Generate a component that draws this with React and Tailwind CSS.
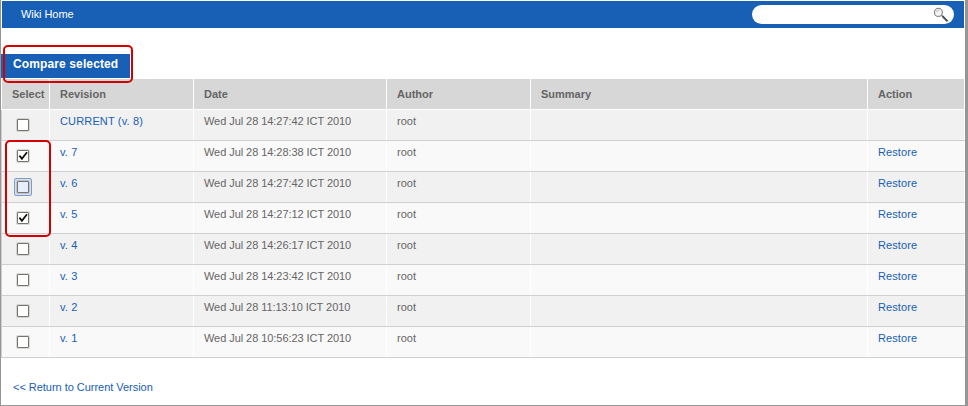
import React from "react";

const revisions = [
  { name: "CURRENT (v. 8)", date: "Wed Jul 28 14:27:42 ICT 2010", current: true },
  { name: "v. 7", date: "Wed Jul 28 14:28:38 ICT 2010", checked: true },
  { name: "v. 6", date: "Wed Jul 28 14:27:42 ICT 2010", focused: true },
  { name: "v. 5", date: "Wed Jul 28 14:27:12 ICT 2010", checked: true },
  { name: "v. 4", date: "Wed Jul 28 14:26:17 ICT 2010" },
  { name: "v. 3", date: "Wed Jul 28 14:23:42 ICT 2010" },
  { name: "v. 2", date: "Wed Jul 28 11:13:10 ICT 2010" },
  { name: "v. 1", date: "Wed Jul 28 10:56:23 ICT 2010" },
];

const columns = "grid grid-cols-[48px_144px_193px_144px_337px_97px]";

function Checkbox({ checked, focused }) {
  const box = (
    <span
      role="checkbox"
      aria-checked={!!checked}
      className={`block h-3 w-3 rounded-[1px] border border-[#77756f] ${
        focused ? "bg-[#e6eefb]" : "bg-white"
      } shadow-[0_0_0_1px_rgba(110,105,95,0.22)]`}
    >
      {checked && (
        <svg viewBox="0 0 10 10" className="block h-[10px] w-[10px]" fill="none">
          <path d="M1.4 4.6 L3.9 7.7 L9 1.2" stroke="#111" strokeWidth="1.8" />
        </svg>
      )}
    </span>
  );
  return focused ? (
    <span className="-m-[3px] block h-[18px] w-[18px] rounded-[2px] border border-[#7f9cc6] bg-[#d6dfec] p-[2px]">
      {box}
    </span>
  ) : (
    box
  );
}

function Cell({ children, className = "" }) {
  return <div className={`border-r border-white pl-[10px] ${className}`}>{children}</div>;
}

function MagnifierIcon() {
  return (
    <svg viewBox="0 0 16 16" className="h-4 w-4" fill="none">
      <circle cx="5.4" cy="5.4" r="4" fill="#f4f4f4" stroke="#8a8a8a" strokeWidth="1.2" />
      <path d="M3.4 5.2 Q3.9 3.5 5.8 3.5" stroke="#b5b5b5" />
      <path d="M8.3 8.2 L10 9.6" stroke="#777" strokeWidth="1.3" />
      <path d="M9.4 9.1 L14.6 14.4" stroke="#484848" strokeWidth="2" />
    </svg>
  );
}

export default function App() {
  return (
    <div className="relative h-[406px] w-[968px] overflow-hidden border-b border-l border-r-[3px] border-[#969696] bg-white pt-px font-['Liberation_Sans',Arial,sans-serif] text-[11px] leading-[13px] text-[#656565]">
      <nav className="ml-px mr-px flex h-[27px] items-center justify-between bg-[#1760b5] pl-[19px] pr-[10px] text-white">
        <a className="tracking-[-0.07px]">Wiki Home</a>
        <div className="flex h-[19px] w-[202px] items-center justify-end rounded-full bg-white pr-[5px]">
          <MagnifierIcon />
        </div>
      </nav>

      <button className="mt-[26px] block h-6 w-[129px] bg-[#1760b5] pb-[5px] pl-3 text-left text-[12px] font-bold leading-[14px] tracking-[0.12px] text-white">
        Compare selected
      </button>

      <div className={`${columns} mt-px ml-px h-[30px] w-[963px] bg-[#d7d7d7] pt-[9px] font-bold`}>
        {["Select", "Revision", "Date", "Author", "Summary", "Action"].map((label) => (
          <Cell key={label} className="-mt-[9px] pt-[9px]">{label}</Cell>
        ))}
      </div>
      <div className="h-px w-full bg-white" />

      <div className="border-l border-[#d0d0d0]">
        {revisions.map((r) => (
          <div
            key={r.name}
            className={`${columns} h-[31px] border-b border-[#d0d0d0] odd:bg-[#f1f1f1] even:bg-[#f9f9f9]`}
          >
            <Cell className="pt-[9px] pl-[15px]">
              <Checkbox checked={r.checked} focused={r.focused} />
            </Cell>
            <Cell className="pt-[5px] tracking-[0.15px] text-[#1760b5]">{r.name}</Cell>
            <Cell className="pt-[5px] tracking-[-0.06px]">{r.date}</Cell>
            <Cell className="pt-[5px]">root</Cell>
            <Cell />
            <Cell className="pt-[5px] tracking-[0.08px] text-[#1760b5]">{r.current ? "" : "Restore"}</Cell>
          </div>
        ))}
      </div>

      <a className="mt-[23px] ml-3 block tracking-[-0.03px] text-[#1760b5]">&lt;&lt; Return to Current Version</a>

      {/* Callout outlines over the button and the chosen revisions */}
      <div className="absolute top-[45px] left-[2px] h-[38px] w-[130px] rounded-[5px] border-2 border-[#d40000]" />
      <div className="absolute top-[140px] left-[4px] h-[97px] w-[46px] rounded-[5px] border-2 border-[#d40000]" />
    </div>
  );
}
